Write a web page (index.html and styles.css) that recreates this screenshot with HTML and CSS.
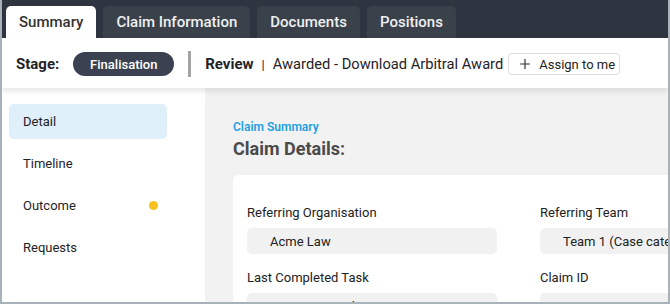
FILE: index.html
```html
<!DOCTYPE html>
<html lang="en">
<head>
  <meta charset="UTF-8" />
  <meta name="viewport" content="width=device-width, initial-scale=1" />
  <title>Claim Summary</title>
  <link rel="stylesheet" href="styles.css">
</head>
<body>
  <div class="frame">
    <nav class="tabs">
      <a class="tab active">Summary</a>
      <a class="tab">Claim Information</a>
      <a class="tab">Documents</a>
      <a class="tab">Positions</a>
    </nav>

    <header class="stagebar">
      <span class="stage-label">Stage:</span>
      <span class="pill">Finalisation</span>
      <span class="divider"></span>
      <span class="review">Review</span>
      <span class="sep">|</span>
      <span class="task">Awarded - Download Arbitral Award</span>
      <button class="assign">
        <svg width="12" height="12" viewBox="0 0 12 12"><path d="M6 1v10M1 6h10" stroke="#333" stroke-width="1.2" fill="none"/></svg>
        Assign to me
      </button>
    </header>

    <div class="layout">
      <aside class="sidenav">
        <a class="item active">Detail</a>
        <a class="item">Timeline</a>
        <a class="item">Outcome <span class="dot"></span></a>
        <a class="item">Requests</a>
      </aside>

      <main class="content">
        <div class="eyebrow">Claim Summary</div>
        <h1>Claim Details:</h1>
        <div class="card">
          <div class="campo">
            <label>Referring Organisation</label>
            <div class="valor">Acme Law</div>
          </div>
          <div class="campo">
            <label>Referring Team</label>
            <div class="valor">Team 1 (Case category A)</div>
          </div>
          <div class="campo">
            <label>Last Completed Task</label>
            <div class="valor">Prepare Award</div>
          </div>
          <div class="campo">
            <label>Claim ID</label>
            <div class="valor">2025-0002</div>
          </div>
        </div>
      </main>
    </div>
  </div>
</body>
</html>
```

FILE: styles.css
```css
* {
  margin: 0;
  padding: 0;
  box-sizing: border-box;
  font-family: "Roboto", "Liberation Sans", sans-serif;
}
body {
  width: 670px;
  height: 304px;
  overflow: hidden;
  background: #fff;
}
.frame {
  height: 304px;
  border: 2px solid #a9b1b9;
  border-top: none;
  display: flex;
  flex-direction: column;
  overflow: hidden;
}
.tabs {
  height: 38px;
  flex-shrink: 0;
  background: #2e3540;
  display: flex;
  align-items: flex-end;
  gap: 7px;
  padding-left: 4px;
}
.tab {
  height: 32px;
  padding: 0 13px;
  display: flex;
  align-items: center;
  background: #3a414b;
  color: #eef0f2;
  font-size: 15px;
  font-weight: 500;
  border-radius: 5px 5px 0 0;
}
.tab.active {
  background: #fff;
  color: #333;
}
.stagebar {
  position: relative;
  z-index: 1;
  height: 50px;
  flex-shrink: 0;
  display: flex;
  align-items: center;
  padding: 2px 0 0 14px;
  background: #fff;
  box-shadow: 0 3px 6px rgba(0, 0, 0, 0.1);
  color: #1f2328;
  font-size: 15px;
}
.stage-label {
  font-weight: 700;
  margin-right: 14px;
}
.pill {
  width: 101px;
  height: 24px;
  border-radius: 12px;
  background: #3a4252;
  color: #fff;
  font-size: 13px;
  font-weight: 500;
  display: flex;
  align-items: center;
  justify-content: center;
}
.divider {
  width: 3px;
  height: 26px;
  background: #a3a3a3;
  margin: 0 14px;
}
.review {
  font-weight: 700;
}
.sep {
  margin: 0 8px;
  font-size: 13px;
}
.task {
  font-size: 14.7px;
}
.assign {
  margin-left: 5px;
  height: 22px;
  width: 112px;
  border: 1px solid #dedede;
  border-radius: 4px;
  background: #fff;
  display: flex;
  align-items: center;
  gap: 8px;
  padding-left: 10px;
  font-size: 13px;
  color: #222;
}
.layout {
  flex: 1;
  display: flex;
  min-height: 0;
}
.sidenav {
  width: 203px;
  flex-shrink: 0;
  background: #fff;
  padding: 16px 38px 0 7px;
  display: flex;
  flex-direction: column;
  gap: 7px;
}
.item {
  height: 35px;
  display: flex;
  align-items: center;
  justify-content: space-between;
  padding: 0 9px 0 14px;
  border-radius: 5px;
  font-size: 13px;
  color: #1f2328;
}
.item.active {
  background: #dff0fa;
}
.dot {
  width: 9px;
  height: 9px;
  border-radius: 50%;
  background: #f5c21b;
}
.content {
  flex: 1;
  background: #f2f2f2;
  padding: 32px 0 0 28px;
  overflow: hidden;
}
.eyebrow {
  color: #1f9fe3;
  font-size: 12px;
  font-weight: 600;
  line-height: 14px;
}
.content h1 {
  font-size: 18px;
  line-height: 21px;
  font-weight: 700;
  color: #4a4a4a;
  margin-top: 4px;
}
.card {
  margin-top: 16px;
  width: 572px;
  background: #fff;
  border-radius: 5px;
  padding: 30px 14px 0;
  display: grid;
  grid-template-columns: 250px 250px;
  column-gap: 43px;
  row-gap: 16px;
}
.campo label {
  display: block;
  font-size: 13px;
  line-height: 15px;
  color: #222;
  margin-bottom: 8px;
}
.valor {
  height: 26px;
  border-radius: 5px;
  background: #f1f1f1;
  padding-left: 23px;
  display: flex;
  align-items: center;
  font-size: 13px;
  color: #222;
  white-space: nowrap;
}
```
